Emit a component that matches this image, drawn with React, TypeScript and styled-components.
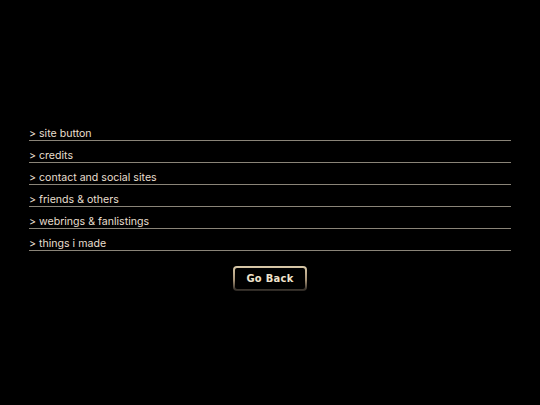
import styled, { createGlobalStyle } from "styled-components";

const GlobalStyle = createGlobalStyle`
  html, body {
    margin: 0;
    padding: 0;
    background: #000;
  }
  body {
    font-family: "Inter", "Noto Sans", sans-serif;
  }
`;

const Page = styled.div`
  width: 540px;
  height: 405px;
  background: #000;
  padding: 119px 29px 0;
  box-sizing: border-box;
  display: flex;
  flex-direction: column;
  align-items: center;
`;

const LinkList = styled.ul`
  list-style: none;
  margin: 0;
  padding: 0;
  width: 100%;
`;

const LinkRow = styled.li`
  height: 22px;
  box-sizing: border-box;
  border-bottom: 1px solid #8a8478;
  display: flex;
  align-items: flex-end;
`;

const LinkText = styled.a`
  color: #e8dfcf;
  font-size: 10.6px;
  line-height: 12px;
  text-decoration: none;
`;

const BackButton = styled.button`
  margin-top: 15px;
  width: 74px;
  height: 25px;
  box-sizing: border-box;
  border: 2px solid transparent;
  border-radius: 4px;
  background:
    linear-gradient(#000, #000) padding-box,
    linear-gradient(#d8c8a8 0%, #a89478 55%, #2a2622 100%) border-box;
  color: #f0e4cc;
  font-family: "DejaVu Sans Condensed", "DejaVu Sans", sans-serif;
  font-stretch: condensed;
  font-weight: bold;
  font-size: 11px;
  letter-spacing: 0.3px;
  display: flex;
  align-items: center;
  justify-content: center;
  padding: 0;
  cursor: pointer;
`;

const links = [
  "site button",
  "credits",
  "contact and social sites",
  "friends & others",
  "webrings & fanlistings",
  "things i made",
];

export default function App() {
  return (
    <>
      <GlobalStyle />
      <Page>
        <LinkList>
          {links.map((l) => (
            <LinkRow key={l}>
              <LinkText href="#">&gt; {l}</LinkText>
            </LinkRow>
          ))}
        </LinkList>
        <BackButton>Go Back</BackButton>
      </Page>
    </>
  );
}
